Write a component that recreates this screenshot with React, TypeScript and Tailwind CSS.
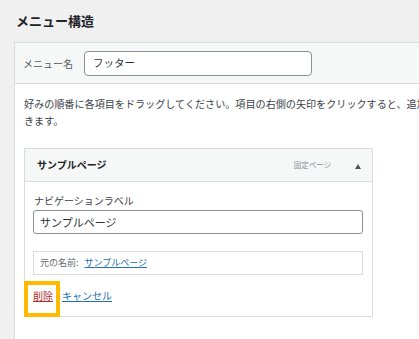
import React from "react";

const font = { fontFamily: '"Noto Sans CJK JP", "Noto Sans", sans-serif' };

function MenuItemBox() {
    return (
        <div className="relative mt-[19px] w-[349px] border border-[#dcdcde] bg-white">
            <div className="flex h-[33px] items-center border-b border-[#dcdcde] bg-[#f6f7f7] pl-[12px] pr-[11px]">
                <span className="flex-1 text-[10px] font-bold leading-[14px] text-[#1d2327]">サンプルページ</span>
                <span className="text-[7.5px] leading-[10px] text-[#8c8f94]">固定ページ</span>
                <svg className="ml-[24px] mt-[2px]" width="6" height="5" viewBox="0 0 6 5">
                    <path d="M3 0 L6 5 L0 5 Z" fill="#50575e" />
                </svg>
            </div>
            <div className="px-[8px] pr-[9px] pt-[12px] pb-[13px]">
                <div className="pl-[1px] text-[10px] leading-[14px] text-[#3c434a]">ナビゲーションラベル</div>
                <div className="mt-[2px] flex h-[24px] w-[330px] items-center rounded-[3px] border border-[#8c8f94] pl-[6px] text-[11px] text-[#2c3338]">
                    サンプルページ
                </div>
                <div className="mt-[17px] flex h-[24px] w-[330px] items-center border border-[#dcdcde] pl-[6px] text-[9px]">
                    <span className="text-[#646970]">元の名前:</span>
                    <span className="ml-[6px] text-[#2271b1] underline">サンプルページ</span>
                </div>
                <div className="mt-[14px] flex items-center gap-[9px] text-[10px] leading-[14px]">
                    <span className="text-[#b32d2e] underline">削除</span>
                    <span className="text-[#2271b1] underline">キャンセル</span>
                </div>
            </div>
            {/* highlight around delete */}
            <div className="absolute left-[-1px] top-[132px] h-[36px] w-[36px] border-4 border-[#ffb900]" />
        </div>
    );
}

export default function App() {
    return (
        <div className="h-[339px] w-[419px] overflow-hidden bg-[#f0f0f1]" style={font}>
            <h2 className="flex h-[42px] items-center pl-4 text-[13px] font-bold text-[#1d2327]">メニュー構造</h2>
            <div className="ml-[14px] w-[600px] border border-[#dcdcde] bg-white">
                <div className="flex h-[41px] items-center gap-[11px] border-b border-[#dcdcde] bg-[#f6f7f7] pl-2">
                    <span className="text-[10px] text-[#50575e]">メニュー名</span>
                    <div className="flex h-[25px] w-[228px] items-center rounded-[4px] border border-[#8c8f94] bg-white pl-[8px] text-[10.5px] text-[#2c3338]">
                        フッター
                    </div>
                </div>
                <div className="pl-[9px] pt-[11px] pb-10">
                    <p className="w-[530px] text-[10.1px] leading-[17px] text-[#3c434a]">
                        好みの順番に各項目をドラッグしてください。項目の右側の矢印をクリックすると、追加の設定オプションを表示できます。
                    </p>
                    <MenuItemBox />
                </div>
            </div>
        </div>
    );
}
